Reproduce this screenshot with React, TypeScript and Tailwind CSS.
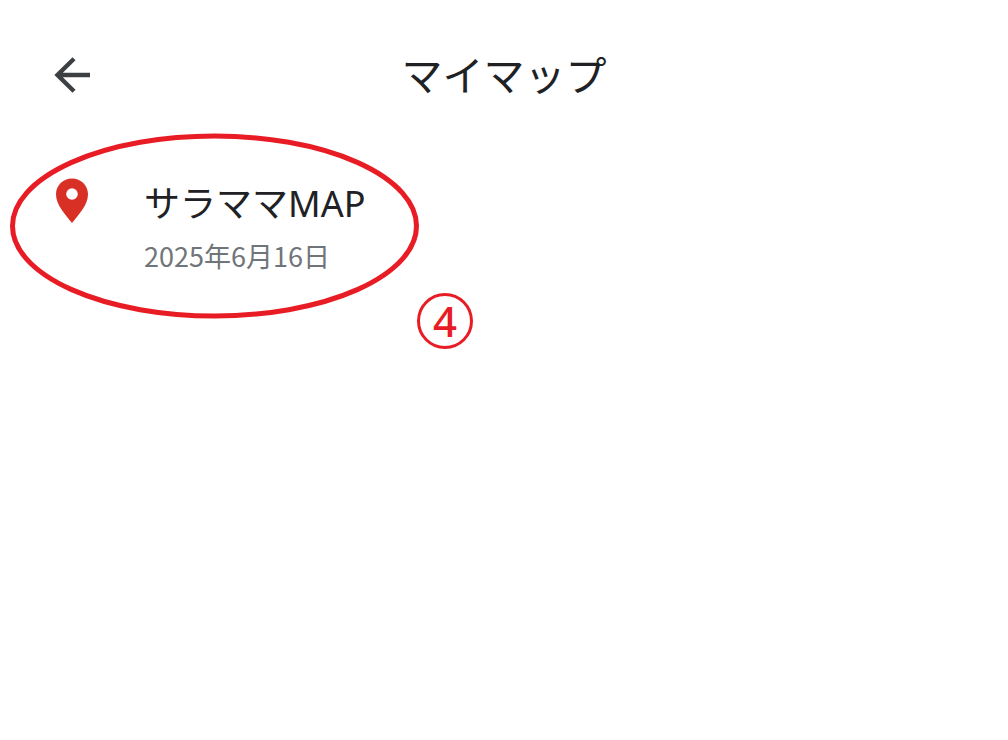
export default function App() {
  return (
    <div className="min-h-screen bg-white font-['Noto_Sans','Noto_Sans_CJK_JP',sans-serif] text-[#202124]">
      <header className="grid grid-cols-[36px_1fr_36px] items-center px-[54px] pt-[47px]">
        <button type="button" aria-label="戻る" className="flex h-14 items-center">
          <svg viewBox="0 0 36 36" className="size-9" fill="none" stroke="#3c4043" strokeWidth="4.4">
            <path d="M36 18H3M20 1.8L3.5 18L20 34.2" />
          </svg>
        </button>
        <h1 className="text-center text-[41px] leading-14">マイマップ</h1>
      </header>

      <main className="relative px-[54px] pt-[75px]">
        <a href="#map" className="flex w-fit items-start gap-[54px]">
          <svg viewBox="0 0 32 45" className="mx-0.5 h-[45px] w-8 shrink-0" fill="#d93025">
            <path fillRule="evenodd" d="M16 0.5C7 0.5 0 7.5 0 16.2C0 27 9 36 16 45C23 36 32 27 32 16.2C32 7.5 25 0.5 16 0.5ZM16 10.2A5.8 5.8 0 1 1 16 21.8A5.8 5.8 0 1 1 16 10.2Z" />
          </svg>
          <span className="flex flex-col">
            <span className="text-[36px] leading-[52px]">サラママMAP</span>
            <span className="font-['Noto_Sans_CJK_JP',sans-serif] text-[27px] leading-[52px] text-[#70757a]">2025年6月16日</span>
          </span>
        </a>
        <svg viewBox="0 0 410 186" className="pointer-events-none absolute top-[30px] left-[10px] h-[186px] w-[410px]" fill="none" stroke="#e81c24" strokeWidth="5">
          <ellipse cx="204.5" cy="93" rx="202" ry="90" />
        </svg>
        <span className="absolute top-[190px] left-[417px] flex size-14 items-center justify-center rounded-full border-3 border-[#e81c24] text-[42px] leading-none font-medium text-[#e81c24]">4</span>
      </main>
    </div>
  );
}
